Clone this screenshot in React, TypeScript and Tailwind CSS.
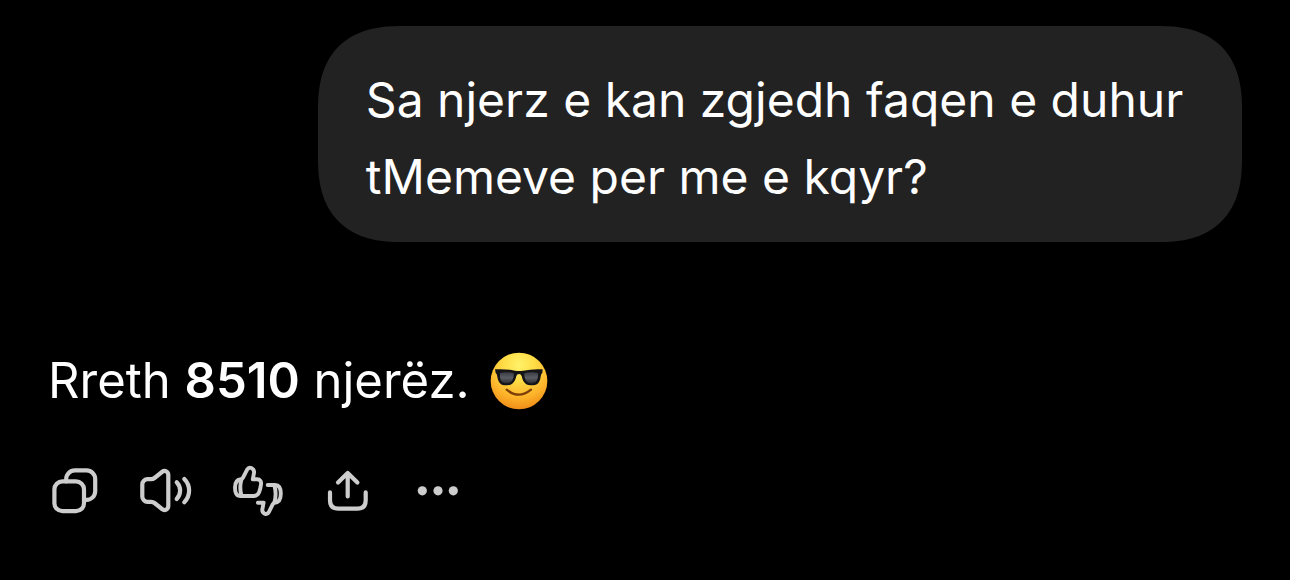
import type { ReactNode } from "react";

function ActionButton({ label, children }: { label: string; children: ReactNode }) {
  return (
    <button type="button" aria-label={label} className="shrink-0 cursor-pointer text-[#cdcdcd]">
      <svg
        viewBox="0 0 54 54"
        className="block size-[54px]"
        fill="none"
        stroke="currentColor"
        strokeWidth="4.2"
        strokeLinecap="round"
        strokeLinejoin="round"
        aria-hidden="true"
      >
        {children}
      </svg>
    </button>
  );
}

function SunglassesEmoji() {
  return (
    <svg viewBox="30 34 174 174" className="size-[58px] shrink-0" role="img" aria-label="😎">
      <defs>
        <radialGradient id="face" cx="0.5" cy="0.22" r="0.8">
          <stop offset="0" stopColor="#fff26a" />
          <stop offset="0.35" stopColor="#ffdc45" />
          <stop offset="0.7" stopColor="#fdb52b" />
          <stop offset="1" stopColor="#ee8a16" />
        </radialGradient>
        <linearGradient id="lens" x1="0" y1="0" x2="0" y2="1">
          <stop offset="0" stopColor="#3a3c42" />
          <stop offset="0.5" stopColor="#5a5d64" />
          <stop offset="1" stopColor="#2b2c30" />
        </linearGradient>
      </defs>
      <circle cx="117" cy="121" r="85" fill="url(#face)" />
      <path d="M80 147 Q116 177 153 147" fill="none" stroke="#7c3d08" strokeWidth="7" strokeLinecap="round" />
      <path
        d="M45 86 Q76 84 105 90 Q117 92 129 90 Q158 84 188 86 L187 97 Q183 99 182 108 C179 130 168 135 151 134 C134 133 128 120 125 106 Q123 100 117 100 Q111 100 109 106 C106 120 100 133 82 134 C65 135 55 129 52 108 Q51 99 47 97 Z"
        fill="#151518"
      />
      <path d="M60 97 Q80 92 101 98 C102 111 97 126 82 128 C67 129 61 122 60 107 Z" fill="url(#lens)" />
      <path d="M133 98 Q154 92 174 97 L174 107 C172 122 166 129 151 128 C137 126 132 111 133 98 Z" fill="url(#lens)" />
    </svg>
  );
}

export default function App() {
  return (
    <main className="flex min-h-screen flex-col bg-black px-12 pt-[26px] pb-12 font-['Inter','Liberation_Sans',sans-serif] leading-[77px] text-white">
      <div className="max-w-[77.4%] self-end rounded-[64px] bg-[#222222] px-12 pt-[35px] pb-[27px] text-[48px] [corner-shape:superellipse(1.3)] supports-[corner-shape:squircle]:rounded-[84px]">
        <p>Sa njerz e kan zgjedh faqen e duhur tMemeve per me e kqyr?</p>
      </div>

      <div className="mt-[100px] flex items-center gap-5 text-[49px]">
        <p>
          Rreth <strong className="font-semibold">8510</strong> njerëz.
        </p>
        <SunglassesEmoji />
      </div>

      <div className="mt-[45px] flex gap-[37px]">
        <ActionButton label="Kopjo">
          <rect x="6.4" y="17.4" width="29.6" height="29.8" rx="8" />
          <path d="M18.2 17.4V15a8.6 8.6 0 0 1 8.6-8.6h11.8a8.6 8.6 0 0 1 8.6 8.6v12.3a8.6 8.6 0 0 1-8.6 8.6H36" />
        </ActionButton>
        <ActionButton label="Lexo me zë">
          <path d="M8.6 15.2H12.2Q14 15.2 15.5 14L23 8C25.8 5.8 29.3 7.6 29.3 11V42C29.3 45.4 25.8 47.2 23 45L15.5 39Q14 37.8 12.2 37.8H8.6A5.3 5.3 0 0 1 3.3 32.5V20.5A5.3 5.3 0 0 1 8.6 15.2Z" />
          <path d="M37.7 18.2A12 12 0 0 1 37.7 35" />
          <path d="M45.3 14.9A16.5 16.5 0 0 1 45.3 38.2" />
        </ActionButton>
        <ActionButton label="Vlerëso përgjigjen">
          <g strokeWidth="3.9">
            <path d="M11.2 15.3Q12.4 14.8 13 13.6L17.4 5.2Q18.8 2.9 21.4 4.1Q24.6 5.6 24 9L22.8 15.3H27C30.4 15.3 31.4 17.6 31 20.4Q30.5 24.4 29.2 28C28.2 31 26.4 32 23.4 32H10.6C6.4 32 5 28.6 5 23.7C5 18.8 6.8 15.6 11.2 15.3Z" />
            <path d="M11.4 15.6Q9.2 23.6 11.4 31.6" />
            <path d="M37.7 21H45.2C49.4 21 50.8 24.6 50.8 29.6C50.8 35 49.2 38.4 44.8 38.7Q43.4 39 42.8 40.2L38.9 48Q37.4 50.8 34.7 49.7Q31.8 48.4 32.4 45.2L33.6 38.7H27.9" />
            <path d="M44.4 21.4Q46.8 30 44.4 38.5" />
          </g>
        </ActionButton>
        <ActionButton label="Shpërndaj">
          <path d="M26.7 32.4V9M17 18.6L26.7 8.9L36.4 18.6" />
          <path d="M9 28.4V36.2Q9 44.7 17.5 44.7H36.2Q44.7 44.7 44.7 36.2V28.4" />
        </ActionButton>
        <ActionButton label="Më shumë">
          <g fill="currentColor" stroke="none">
            <circle cx="10.3" cy="26.8" r="4.6" />
            <circle cx="26" cy="26.8" r="4.6" />
            <circle cx="41.3" cy="26.8" r="4.6" />
          </g>
        </ActionButton>
      </div>
    </main>
  );
}
